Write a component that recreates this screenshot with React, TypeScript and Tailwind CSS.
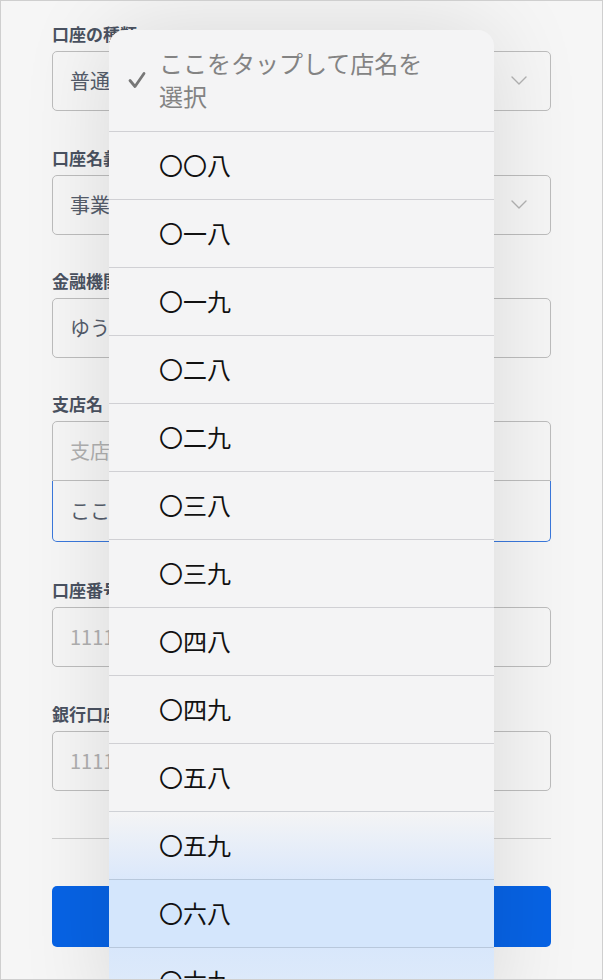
import React from "react";

const FONT = { fontFamily: '"Noto Sans CJK JP", "Noto Sans", sans-serif' };

function Chevron() {
  return (
    <svg width="18" height="12" viewBox="0 0 18 12" className="shrink-0">
      <polyline points="2,2 9,9 16,2" fill="none" stroke="#b3b3b3" strokeWidth="1.4" strokeLinecap="round" strokeLinejoin="round" />
    </svg>
  );
}

function Label({ children, className = "" }: { children: React.ReactNode; className?: string }) {
  return (
    <div className={`text-[17px] leading-[24px] font-bold text-[#4a5261] mb-[5px] ${className}`}>{children}</div>
  );
}

function SelectBox({ value }: { value: string }) {
  return (
    <div className="h-[60px] rounded-[5px] border border-[#bdbdbd] flex items-center justify-between pl-[17px] pr-[22px]">
      <span className="text-[20px] text-[#555d6b]">{value}</span>
      <Chevron />
    </div>
  );
}

function InputBox({ value, placeholder }: { value?: string; placeholder?: string }) {
  return (
    <div className="h-[60px] rounded-[5px] border border-[#bdbdbd] flex items-center pl-[17px]">
      {value ? (
        <span className="text-[20px] text-[#555d6b]">{value}</span>
      ) : (
        <span className="text-[20px] text-[#b0b0b0]">{placeholder}</span>
      )}
    </div>
  );
}

const items = [
  "〇〇八",
  "〇一八",
  "〇一九",
  "〇二八",
  "〇二九",
  "〇三八",
  "〇三九",
  "〇四八",
  "〇四九",
  "〇五八",
  "〇五九",
  "〇六八",
  "〇六九",
];

function rowClass(i: number) {
  if (i === 10) return "bg-gradient-to-b from-[#f4f4f5] to-[#dbe8fb] border-[#cfd1d6]";
  if (i === 11) return "bg-[#d4e6fc] border-[#b8c8dc]";
  if (i === 12) return "bg-gradient-to-b from-[#d8e7fb] to-[#e2ecf9] border-[#b8c8dc]";
  return "border-[#d0d0d4]";
}

export default function App() {
  return (
    <div
      style={FONT}
      className="relative w-[603px] h-[980px] overflow-hidden border border-[#cfcfcf] bg-[#f6f6f6]"
    >
      {/* form */}
      <div className="px-[51px] pt-[21px] flex flex-col">
        <Label>口座の種類</Label>
        <SelectBox value="普通預金" />

        <Label className="mt-[35px]">口座名義</Label>
        <SelectBox value="事業用口座" />

        <Label className="mt-[34px]">金融機関名</Label>
        <InputBox value="ゆうちょ銀行" />

        <Label className="mt-[34px]">支店名</Label>
        <div className="h-[60px] rounded-t-[5px] border border-[#bdbdbd] flex items-center pl-[17px]">
          <span className="text-[20px] text-[#b0b0b0]">支店名を入力</span>
        </div>
        <div className="h-[61px] rounded-b-[5px] border border-t-0 border-[#3a78dc] flex items-center pl-[17px]">
          <span className="text-[20px] text-[#555d6b]">ここをタップして店名を選択</span>
        </div>

        <Label className="mt-[36px]">口座番号</Label>
        <InputBox placeholder="1111111" />

        <Label className="mt-[35px]">銀行口座番号（確認）</Label>
        <InputBox placeholder="1111111" />

        <div className="mt-[47px] h-px bg-[#cfcfcf]" />

        <div className="mt-[47px] h-[61px] rounded-[5px] bg-[#0763e5] flex items-center justify-center">
          <span className="text-[20px] font-bold text-white">登録する</span>
        </div>
      </div>

      {/* picker popup */}
      <div className="absolute left-[108px] top-[29px] w-[385px] rounded-t-[16px] bg-[#f4f4f5] shadow-[0_0_90px_rgba(0,0,0,0.12)] flex flex-col">
        <div className="h-[101px] flex items-center pb-[4px]">
          <div className="w-[50px] flex justify-end pr-[13px] pt-[3px]">
            <svg width="18" height="18" viewBox="0 0 18 18">
              <polyline points="2,9.5 7,15.5 16,2.5" fill="none" stroke="#777777" strokeWidth="2.8" strokeLinecap="round" strokeLinejoin="round" />
            </svg>
          </div>
          <div className="w-[280px] text-[24px] leading-[33px] text-[#838383]">ここをタップして店名を選択</div>
        </div>
        {items.map((t, i) => (
          <div key={t} className={`h-[68px] border-t flex items-center pl-[50px] pb-[2px] ${rowClass(i)}`}>
            <span className="text-[24px] text-[#111111]">{t}</span>
          </div>
        ))}
      </div>
    </div>
  );
}
